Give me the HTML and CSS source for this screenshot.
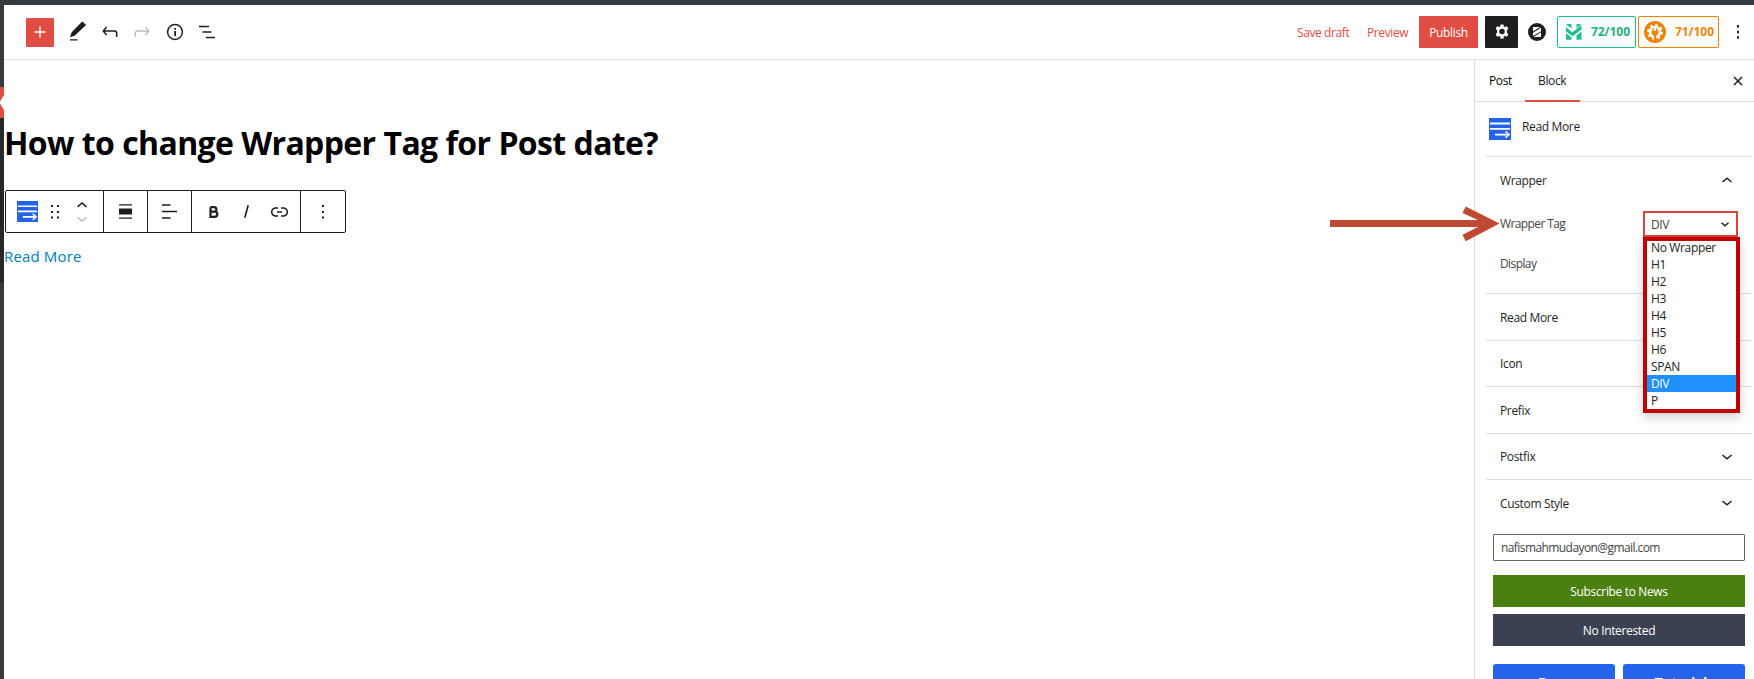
FILE: index.html
```html
<!DOCTYPE html>
<html lang="en">
<head>
<meta charset="utf-8">
<title>Edit Post</title>
<link rel="stylesheet" href="styles.css">
</head>
<body>
<div class="rail"><div class="rail-active"><svg width="4" height="31" viewBox="0 0 4 31"><path d="M4 8v15L0 16.500v-2z" fill="#fff"/></svg></div><div class="rail-sub"></div></div>
<div class="app">
  <header class="header">
    <div class="tools">
      <button class="add"><svg width="12" height="12" viewBox="0 0 12 12"><path d="M6 .5v11M.5 6h11" stroke="#fff" stroke-width="1.3"/></svg></button>
      <svg class="ico" width="32" height="32" viewBox="-4 -4 32 32"><path fill="#1e1e1e" d="M20.1 5.1 17 2.1a1 1 0 0 0-1.3 0L5.500 12.600l-1.500 4.600 4.600-1.500L20.100 5.100zM4 19.200h7.500v1.300H4z"/></svg>
      <svg class="ico" width="32" height="32" viewBox="-4 -4 32 32"><path d="M8.600 7 5.300 11l3.300 4M5.300 11H16.500c1.700 0 2.200 1.200 2.200 2.500v3.500" fill="none" stroke="#1e1e1e" stroke-width="1.500"/></svg>
      <svg class="ico" width="32" height="32" viewBox="-4 -4 32 32"><path d="M15.400 7l3.300 4-3.300 4M18.700 11H7.500c-1.700 0-2.200 1.200-2.200 2.500v3.500" fill="none" stroke="#bbb" stroke-width="1.400"/></svg>
      <svg class="ico" width="32" height="32" viewBox="0 0 32 32"><circle cx="16" cy="16" r="7.400" fill="none" stroke="#1e1e1e" stroke-width="1.500"/><path d="M15.200 15h1.800v5h-1.800zM15.200 12h1.800v1.700h-1.800z" fill="#1e1e1e"/></svg>
      <svg class="ico" width="32" height="32" viewBox="0 0 32 32"><path d="M8 10.500h10M11.500 16h9M15 21.500h9" stroke="#1e1e1e" stroke-width="1.400"/></svg>
    </div>
    <div class="actions">
      <a class="link save">Save draft</a>
      <a class="link preview">Preview</a>
      <button class="publish">Publish</button>
      <button class="gear"><svg width="16" height="16" viewBox="0 0 16 16"><path fill="#fff" fill-rule="evenodd" d="M6.600.4h2.800l.5 2 1 .5 2-.7 1.500 2.500-1.500 1.500v2.600l1.500 1.500-1.500 2.500-2-.7-1 .5-.5 2.100H6.600l-.5-2.100-1-.5-2 .7-1.500-2.500 1.500-1.500V6.200L1.600 4.700l1.500-2.500 2 .7 1-.5zM8 4.800a2.700 2.700 0 1 0 0 5.500 2.700 2.700 0 0 0 0-5.500z"/></svg></button>
      <svg class="brand" width="18" height="18" viewBox="0 0 18 18"><circle cx="9" cy="9" r="9" fill="#1e1e1e"/><path d="M5 4h7L5 8.400zM13 4.800v3.400L5 13V9.700zM13 9.300V14H5.500z" fill="#fff"/></svg>
      <div class="score green"><svg width="16" height="16" viewBox="0 0 16 16"><path fill="#1fc28b" d="M0 0h5.500v4.300L2.500 2.300zM10.500 0h5L10.500 4.200zM0 3.200l6.300 5L15.500 1v4.500L6.500 12.300 0 7.500zM0 9.300l5.500 4v2.400H0zM15.500 7.500v8.200h-5v-4.500z"/></svg><b>72/100</b></div>
      <div class="score orange"><svg width="22" height="22" viewBox="0 0 22 22"><circle cx="11" cy="11" r="11" fill="#f08200"/><circle cx="11" cy="11" r="6.300" fill="#fff"/><circle cx="11" cy="11" r="6.900" fill="none" stroke="#fff" stroke-width="2" stroke-dasharray="2.710 2.710"/><path d="M7.500 9.700h7v2.300l-1.700 2.600h-.9V19h-1.800v-4.400h-.9L7.500 12zM8.500 7.300h1.400v2.400H8.500zM12.100 7.300h1.400v2.400h-1.400z" fill="#f08200"/></svg><b>71/100</b></div>
      <svg class="more" width="4" height="14" viewBox="0 0 4 14"><path d="M1 0h2v2.500H1zM1 5.700h2v2.500H1zM1 11.300h2v2.500H1z" fill="#1e1e1e"/></svg>
    </div>
  </header>
  <div class="body">
    <main class="canvas">
      <h1 class="title">How to change Wrapper Tag for Post date?</h1>
      <div class="toolbar">
        <div class="group g1">
          <svg width="21" height="21" viewBox="0 0 22 22"><use href="#block"/></svg>
          <svg class="drag" width="8" height="14" viewBox="0 0 8 14"><path d="M0 0h2v2H0zM6 0h2v2H6zM0 6h2v2H0zM6 6h2v2H6zM0 11.500h2v2H0zM6 11.500h2v2H6z" fill="#1e1e1e"/></svg>
          <svg class="mover" width="10" height="20" viewBox="0 0 10 20"><path d="M.6 4.900 5 1l4.400 3.900" fill="none" stroke="#1e1e1e" stroke-width="1.500"/><path d="M.6 15.200 5 19l4.400-3.800" fill="none" stroke="#bbb" stroke-width="1.500"/></svg>
        </div>
        <div class="group g2"><svg width="13" height="15" viewBox="0 0 13 15"><path d="M0 .8h13M0 14.200h13" stroke="#1e1e1e" stroke-width="1.200"/><path d="M0 4.500h13v6H0z" fill="#1e1e1e"/></svg></div>
        <div class="group g3"><svg width="15" height="15" viewBox="0 0 15 15"><path d="M0 1h8.500M0 7.500h15M0 14h8.500" stroke="#1e1e1e" stroke-width="1.300"/></svg></div>
        <div class="group g4">
          <svg class="bold" width="10" height="12" viewBox="0 0 10 12"><path d="M1.500 1.200h3.300c3.500 0 3.500 4.500 0 4.500H1.500M1.500 5.700h4c3.800 0 3.800 5.100 0 5.100h-4V1.200" fill="none" stroke="#1e1e1e" stroke-width="2.200"/></svg>
          <svg class="italic" width="5" height="13" viewBox="0 0 5 13"><path d="M4.200.3.800 12.700" stroke="#1e1e1e" stroke-width="1.600"/></svg>
          <svg width="17" height="10" viewBox="0 0 17 10"><path d="M7 .9H4.800a4 4 0 0 0 0 8.200H7M10 .9h2.200a4 4 0 0 1 0 8.200H10M6 5h5" fill="none" stroke="#1e1e1e" stroke-width="1.500"/></svg>
        </div>
        <div class="group g5"><svg width="2" height="14" viewBox="0 0 2 14"><path d="M0 0h2v2H0zM0 6h2v2H0zM0 11.500h2v2H0z" fill="#1e1e1e"/></svg></div>
      </div>
      <a class="readmore">Read More</a>
    </main>
    <aside class="sidebar">
      <nav class="tabs">
        <span class="tab post">Post</span><span class="tab block">Block</span>
        <svg class="close" width="10" height="10" viewBox="0 0 10 10"><path d="M1 1l8 8M9 1 1 9" stroke="#1e1e1e" stroke-width="1.500"/></svg>
      </nav>
      <div class="card"><svg width="22" height="22" viewBox="0 0 22 22"><use href="#block"/></svg><span>Read More</span></div>
      <section class="panel open">
        <div class="panel-head"><span>Wrapper</span><svg width="10" height="6" viewBox="0 0 10 6"><path d="M.5 5 5 1.200 9.500 5" fill="none" stroke="#1e1e1e" stroke-width="1.500"/></svg></div>
        <div class="row">
          <label>Wrapper Tag</label>
          <div class="select"><span>DIV</span><svg width="8" height="5" viewBox="0 0 8 5"><path d="M.5.7 4 3.800 7.500.7" fill="none" stroke="#1e1e1e" stroke-width="1.400"/></svg>
            <ul class="options"><li>No Wrapper</li><li>H1</li><li>H2</li><li>H3</li><li>H4</li><li>H5</li><li>H6</li><li>SPAN</li><li class="on">DIV</li><li>P</li></ul>
          </div>
        </div>
        <div class="row"><label>Display</label></div>
      </section>
      <section class="panel p1"><span>Read More</span><svg width="10" height="6"><use href="#down"/></svg></section>
      <section class="panel p2"><span>Icon</span><svg width="10" height="6"><use href="#down"/></svg></section>
      <section class="panel p1"><span>Prefix</span><svg width="10" height="6"><use href="#down"/></svg></section>
      <section class="panel p2"><span>Postfix</span><svg width="10" height="6"><use href="#down"/></svg></section>
      <section class="panel p1"><span>Custom Style</span><svg width="10" height="6"><use href="#down"/></svg></section>
      <div class="news">
        <div class="email">nafismahmudayon@gmail.com</div>
        <button class="wide subscribe">Subscribe to News</button>
        <button class="wide decline">No Interested</button>
        <div class="pair"><button>Docs</button><button>Tutorials</button></div>
      </div>
    </aside>
  </div>
</div>
<svg class="arrow" width="170" height="36" viewBox="0 0 170 36"><path d="M0 13h148L132.500 6l3.200-6.500L169.500 16.500l-33.800 17.700-3.200-6.500L148 20H0z" fill="#bf4a34"/></svg>
<svg class="defs" width="0" height="0"><defs>
  <g id="block"><path fill="#2563eb" d="M0 0h22v22H0z"/><path d="M1 5.500h20M1 10.800h20M6 16.600h13" stroke="#fff" stroke-width="1.800"/><path d="M16.500 13.500 20 16.600l-3.500 3.100" fill="none" stroke="#fff" stroke-width="1.600"/></g>
  <path id="down" d="M.5 1 5 4.800 9.500 1" fill="none" stroke="#1e1e1e" stroke-width="1.500"/>
</defs></svg>
</body>
</html>
```
FILE: styles.css
```css
* { box-sizing: border-box; }
body { margin: 0; width: 1754px; height: 679px; overflow: hidden; background: #363b3f; font-family: "Open Sans", "Noto Sans", sans-serif; font-size: 12px; letter-spacing: -.35px; color: #1e1e1e; display: flex; padding-top: 5px; }
button { border: 0; padding: 0; font: inherit; letter-spacing: inherit; color: #fff; display: flex; align-items: center; justify-content: center; }
svg { display: block; flex: none; }
ul { list-style: none; margin: 0; padding: 0; }
.rail { width: 4px; flex: none; padding-top: 82px; }
.rail-active { height: 31px; background: #e14d43; }
.rail-sub { height: 165px; background: #26282a; }
.app { flex: 1; background: #fff; display: flex; flex-direction: column; height: 674px; }
.header { height: 55px; border-bottom: 1px solid #ddd; display: flex; justify-content: space-between; align-items: center; flex: none; }
.tools { display: flex; align-items: center; padding-left: 22px; }
.add { width: 28px; height: 29px; background: #e14d43; border-radius: 1px; margin-right: 8px; }
.ico { margin-right: .2px; }
.actions { display: flex; align-items: center; padding-right: 14px; }
.link { color: #e14d43; letter-spacing: -.4px; }
.save { width: 70px; }
.preview { width: 52px; }
.publish { width: 59px; height: 32px; background: #e14d43; border-radius: 1px; margin-right: 7px; }
.gear { width: 33px; height: 32px; background: #1e1e1e; border-radius: 1px; margin-right: 10px; }
.brand { margin-right: 11px; }
.score { height: 32px; border: 1px solid; border-radius: 2px; display: flex; align-items: center; }
.score b { font-size: 12px; letter-spacing: -.05px; line-height: 16px; padding-bottom: 1px; }
.green { width: 79px; padding-left: 8px; gap: 9px; color: #22b07d; border-color: #1fc28b; margin-right: 2px; }
.orange { width: 81px; padding-left: 5px; gap: 9px; color: #f08200; margin-right: 17px; }
.body { flex: 1; display: flex; min-height: 0; }
.canvas { flex: 1; padding-left: 1px; }
.title { margin: 61px 0 0 -1px; font-size: 32px; line-height: 44px; letter-spacing: -.65px; word-spacing: .4px; color: #000; white-space: nowrap; }
.toolbar { margin-top: 25px; width: 341px; height: 43px; border: 1px solid #1e1e1e; border-radius: 2px; display: flex; }
.group { display: flex; align-items: center; justify-content: center; border-right: 1px solid #1e1e1e; }
.g1 { width: 98px; justify-content: flex-start; padding-left: 11px; gap: 13px; }
.drag { margin-right: 5px; }
.g2, .g3 { width: 44px; }
.g4 { width: 109px; justify-content: flex-start; padding-left: 17px; }
.bold { margin-right: 25px; }
.italic { margin-right: 22px; }
.g5 { flex: 1; border: 0; }
.readmore { display: block; margin: 12px 0 0 -1px; font-size: 15px; line-height: 22px; color: #007cba; letter-spacing: .15px; }
.sidebar { width: 280px; border-left: 1px solid #ddd; overflow: hidden; display: flex; flex-direction: column; }
.tabs { height: 42px; flex: none; border-bottom: 1px solid #ddd; display: flex; align-items: center; padding-right: 11px; }
.tab { height: 42px; line-height: 42px; }
.post { width: 50px; padding-left: 14px; color: #000; }
.block { width: 55px; padding-left: 13px; border-bottom: 2px solid #e14d43; }
.close { margin-left: auto; }
.card { display: flex; gap: 11px; padding: 16px 0 0 14px; height: 54px; line-height: 18px; flex: none; }
.panel { margin-left: 11px; margin-right: 2px; border-top: 1px solid #ddd; flex: none; padding: 0 20px 0 14px; display: flex; justify-content: space-between; align-items: center; }
.p1 { height: 47px; }
.p2 { height: 46px; }
.open { display: block; height: 137px; padding-right: 0; }
.panel-head { display: flex; align-items: center; justify-content: space-between; height: 47px; padding: 0 20px 1px 0; }
.row { display: flex; align-items: center; justify-content: space-between; padding-right: 14px; height: 40px; color: #444; }
.row label { letter-spacing: -.6px; padding-bottom: 1px; }
.select { position: relative; width: 95px; height: 26px; border: 2px solid #d8443a; padding: 0 7px 0 6px; display: flex; align-items: center; justify-content: space-between; }
.options { position: absolute; z-index: 2; left: -2px; top: 24px; width: 97px; height: 176px; border: 4px solid #c00000; background: #fff; box-shadow: 0 4px 10px rgba(0,0,0,.2); color: #222; }
.options li { height: 17px; line-height: 17px; padding-left: 4px; white-space: nowrap; }
.options li:first-child { margin-top: -2px; }
.options .on { background: #1e90ff; color: #fff; }
.news { padding: 8px 9px 0 18px; flex: none; }
.email { height: 27px; line-height: 25px; border: 1px solid #666; border-radius: 1px; padding-left: 7px; color: #444; letter-spacing: -.58px; }
.wide { width: 100%; height: 32px; margin-top: 14px; background: #4b7f0f; }
.decline { margin-top: 7px; background: #3a4252; }
.pair { display: grid; grid-template-columns: 122px 122px; gap: 8px; margin-top: 18px; }
.pair button { height: 36px; background: #2563eb; border-radius: 3px; font-size: 14px; font-weight: 700; }
.arrow { position: absolute; left: 1330px; top: 207px; overflow: visible; }
.defs { position: absolute; }
```
